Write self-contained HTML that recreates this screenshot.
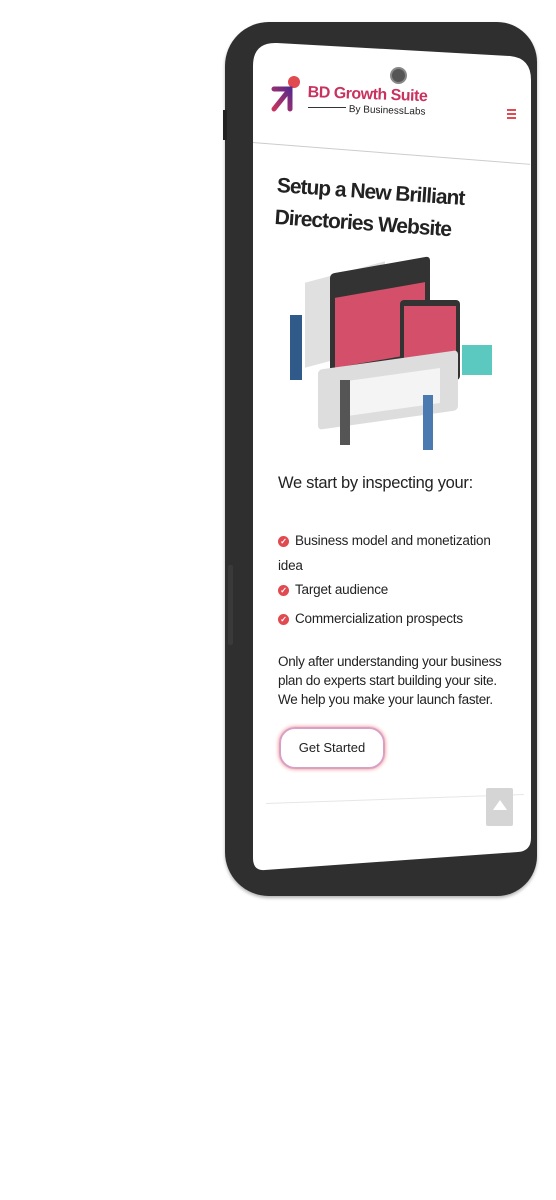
<!DOCTYPE html>
<html><head><meta charset="utf-8"><style>
body{margin:0;width:556px;height:1200px;background:#fff;position:relative;overflow:hidden;font-family:"Liberation Sans",sans-serif;}
.a{position:absolute}
.t{color:#222;white-space:nowrap;transform-origin:left top;}
.ck{display:inline-block;width:11px;height:11px;border-radius:50%;background:#e04a50;color:#fff;font-size:8px;line-height:11px;text-align:center;vertical-align:1px;margin-right:6px;font-weight:bold}
</style></head><body>
<div class="a" style="left:225px;top:22px;width:312px;height:874px;background:#2f2f2f;border-radius:44px 40px 40px 44px;box-shadow:0 2px 3px rgba(0,0,0,.3)"></div>
<div class="a" style="left:223px;top:110px;width:4px;height:30px;background:#222"></div>
<div class="a" style="left:228px;top:565px;width:5px;height:80px;background:#3a3a3a;border-radius:2px"></div>
<svg class="a" style="left:0;top:0" width="556" height="1200">
<path d="M253 66 Q253 42 277 43 L510 56 Q531 58 531 80 L531 838 Q531 851 518 852 L265 870 Q253 871 253 858 Z" fill="#fff"/>
</svg>
<div class="a" style="left:390px;top:67px;width:13px;height:13px;border-radius:50%;background:#555;border:2px solid #888"></div>
<svg class="a" style="left:270px;top:75px" width="32" height="40" viewBox="0 0 32 40">
<defs><linearGradient id="g" x1="0" y1="1" x2="1" y2="0"><stop offset="0" stop-color="#c8325e"/><stop offset="1" stop-color="#5a2a8a"/></linearGradient></defs>
<circle cx="24" cy="7" r="6" fill="#e04a50"/>
<path d="M4 34 L20 14 M4 14 H20 V34" stroke="url(#g)" stroke-width="5" fill="none" stroke-linecap="round"/>
</svg>
<div class="a t" style="left:308px;top:84px;font-size:16px;font-weight:bold;color:#c8325e;transform:rotate(2deg);letter-spacing:-.5px">BD Growth Suite</div>
<div class="a" style="left:308px;top:107px;width:38px;height:1px;background:#333"></div>
<div class="a t" style="left:349px;top:104px;font-size:10px;transform:rotate(2deg)">By BusinessLabs</div>
<div class="a" style="left:507px;top:109px;width:9px;height:10px;border-top:2px solid #e04a50;border-bottom:2px solid #e04a50;box-sizing:border-box"></div>
<div class="a" style="left:507px;top:113px;width:9px;height:2px;background:#e04a50"></div>
<div class="a" style="left:253px;top:142px;width:278px;height:1px;background:#ccc;transform:rotate(4.5deg);transform-origin:left"></div>
<div class="a t" style="left:278px;top:170px;font-size:21px;font-weight:bold;line-height:32px;transform:rotate(4deg);letter-spacing:-1px">Setup a New Brilliant<br>Directories Website</div>
<div class="a" style="left:305px;top:272px;width:80px;height:85px;background:#e0e0e0;transform:skewY(-15deg)"></div>
<div class="a" style="left:330px;top:265px;width:100px;height:100px;background:#333;border-radius:4px;transform:skewY(-10deg)"></div>
<div class="a" style="left:335px;top:290px;width:90px;height:70px;background:#d4506a;transform:skewY(-10deg)"></div>
<div class="a" style="left:400px;top:300px;width:60px;height:80px;background:#333;border-radius:4px"></div>
<div class="a" style="left:404px;top:306px;width:52px;height:68px;background:#d4506a"></div>
<div class="a" style="left:318px;top:360px;width:140px;height:60px;background:#ddd;transform:skewY(-8deg);border-radius:4px"></div>
<div class="a" style="left:340px;top:375px;width:100px;height:35px;background:#f4f4f4;transform:skewY(-8deg)"></div>
<div class="a" style="left:290px;top:315px;width:12px;height:65px;background:#2f5a8a"></div>
<div class="a" style="left:340px;top:380px;width:10px;height:65px;background:#555"></div>
<div class="a" style="left:423px;top:395px;width:10px;height:55px;background:#4a7ab0"></div>
<div class="a" style="left:462px;top:345px;width:30px;height:30px;background:#5cc9c0"></div>
<div class="a t" style="left:278px;top:474px;font-size:16.5px;letter-spacing:-.3px">We start by inspecting your:</div>
<div class="a t" style="left:278px;top:528px;font-size:13.5px;line-height:25px;letter-spacing:-.2px"><span class="ck">✓</span>Business model and monetization<br>idea</div>
<div class="a t" style="left:278px;top:582px;font-size:13.5px;letter-spacing:-.2px"><span class="ck">✓</span>Target audience</div>
<div class="a t" style="left:278px;top:611px;font-size:13.5px;letter-spacing:-.2px"><span class="ck">✓</span>Commercialization prospects</div>
<div class="a t" style="left:278px;top:652px;font-size:13.5px;line-height:19px;letter-spacing:-.3px">Only after understanding your business<br>plan do experts start building your site.<br>We help you make your launch faster.</div>
<div class="a" style="left:279px;top:727px;width:106px;height:42px;border-radius:16px;border:2px solid #d9a0c6;box-shadow:0 0 4px #f08080;box-sizing:border-box;font-size:13px;line-height:38px;text-align:center;color:#222">Get Started</div>
<div class="a" style="left:266px;top:803px;width:258px;height:1px;background:#e6e6e6;transform:rotate(-2deg);transform-origin:left"></div>
<div class="a" style="left:486px;top:788px;width:27px;height:38px;background:#d5d5d5;border-radius:2px"></div>
<div class="a" style="left:493px;top:800px;width:0;height:0;border-left:7px solid transparent;border-right:7px solid transparent;border-bottom:10px solid #fff"></div>
</body></html>
